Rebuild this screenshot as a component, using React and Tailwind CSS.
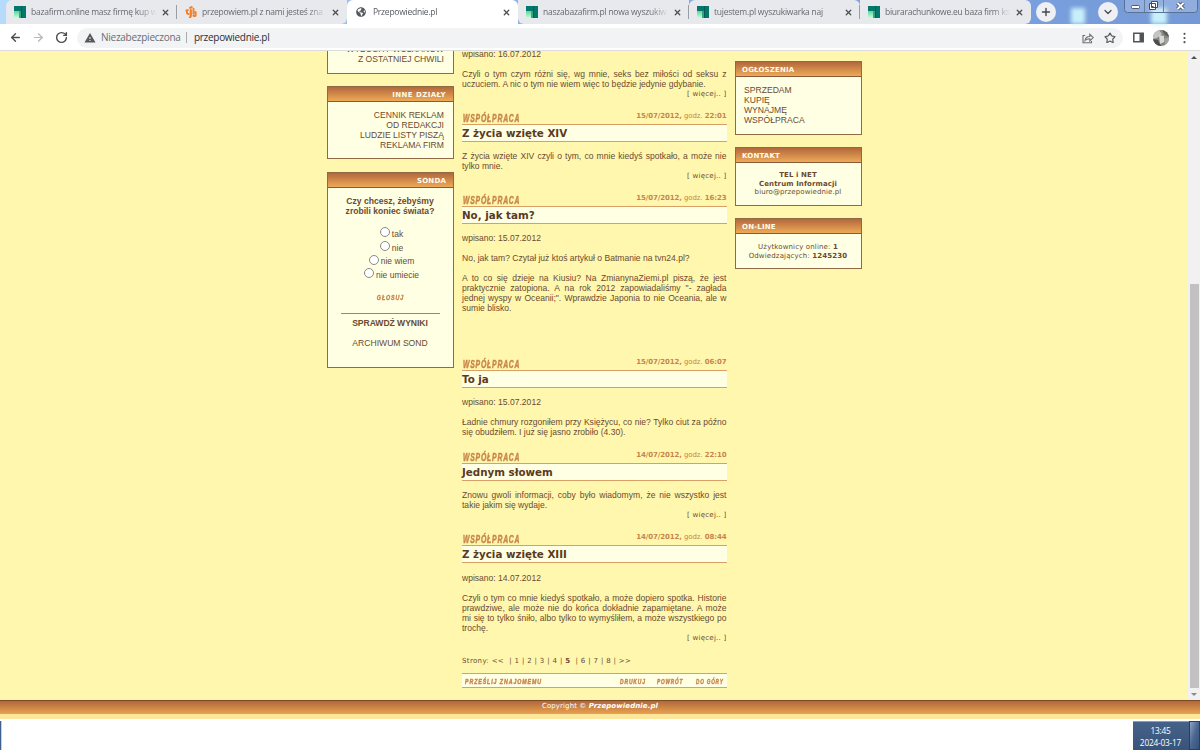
import React from "react";
import { FaGlobeAmericas } from "react-icons/fa";
import { MdWarning } from "react-icons/md";
import { ArrowLeft, ArrowRight, RotateCw, Star, X, Plus, ChevronDown } from "lucide-react";

function TealIcon() {
  return (
    <svg className="h-3 w-3 shrink-0" viewBox="0 0 12 12">
      <defs>
        <linearGradient id="mint" x1="0" y1="0" x2="0" y2="1">
          <stop offset="0" stopColor="#5fd3a0" />
          <stop offset="1" stopColor="#c5ffd8" />
        </linearGradient>
      </defs>
      <rect width="12" height="12" fill="#04786a" />
      <rect y="5" width="7" height="7" fill="url(#mint)" />
      <rect x="5" y="5" width="2" height="7" fill="#35a582" />
      <rect x="7" width="1" height="12" fill="#0b5a52" />
    </svg>
  );
}

function FlameIcon() {
  return (
    <svg className="h-3 w-3 shrink-0" viewBox="0 0 12 12" fill="none" stroke="#f5812a" strokeLinecap="round">
      <path d="M2 4.300v2.600q0 1.100 1.600 1.100M1.300 4.600l1.500-.5" strokeWidth="2" />
      <path d="M5.200 1.800l1.400-.6M5.800 4.200v5.200q0 1.400-.8 1.800" strokeWidth="2.300" />
      <path d="M8.500 2.800v4.600M10.600 6v3.600q-1 .8-2.200 0" strokeWidth="2" />
    </svg>
  );
}

function Tab({ icon, title, titleClass, className = "", divider }) {
  return (
    <div className={"flex h-6 shrink-0 items-center " + className}>
      {icon}
      <div
        className={
          "ml-[5px] min-w-0 flex-1 whitespace-nowrap text-[8.500px] tracking-[-0.240px] [mask-image:linear-gradient(to_right,black_85%,transparent)] " +
          titleClass
        }
      >
        {title}
      </div>
      <X className="ml-1 h-[9px] w-[9px] shrink-0 text-[#4b4e52]" strokeWidth={3.4} />
      <div className={"ml-1.5 h-[14px] w-px shrink-0 " + (divider ? "bg-[#9a9da3]" : "")} />
    </div>
  );
}

function TabBar() {
  const t = "text-[#65696e]";
  return (
    <div className="flex h-6 bg-gradient-to-r from-[#b5dcfb] via-[#83adf0] to-[#7599d6]">
      <Tab className="ml-[6px] w-[171px] rounded-tl-md bg-[#e8e9ed] pl-2" icon={<TealIcon />} title="bazafirm.online masz firmę kup w" titleClass={t} divider />
      <Tab className="w-[170px] rounded-br-md bg-[#e8e9ed] pl-2" icon={<FlameIcon />} title="przepowiem.pl z nami jesteś zna" titleClass={t} />
      <Tab
        className="w-[171px] rounded-t-md bg-white pl-[9px]"
        icon={<FaGlobeAmericas className="mr-0.5 h-[10px] w-[10px] shrink-0 text-[#55595e]" />}
        title="Przepowiednie.pl"
        titleClass="text-[#55595e]"
      />
      <Tab className="w-[171px] rounded-bl-md bg-[#e8e9ed] pl-2" icon={<TealIcon />} title="naszabazafirm.pl nowa wyszukiw" titleClass={t} divider />
      <Tab className="w-[171px] rounded-t-md bg-[#e8e9ed] pl-2" icon={<TealIcon />} title="tujestem.pl wyszukiwarka naj" titleClass={t} divider />
      <Tab className="w-[171px] rounded-r-md bg-[#e8e9ed] pl-2" icon={<TealIcon />} title="biurarachunkowe.eu baza firm ks" titleClass={t} />
      <div className="flex flex-1 items-center">
        <div className="ml-[5px] flex h-5 w-5 items-center justify-center rounded-full bg-[#eef0f4]">
          <Plus className="h-3 w-3 text-[#44474b]" strokeWidth={2.8} />
        </div>
        <div className="ml-[15px] mt-2 h-4 w-3.5 bg-[#c9f0fa] blur-[2px]" />
        <div className="ml-[13px] flex h-5 w-5 items-center justify-center rounded-full bg-[#eef0f4]">
          <ChevronDown className="h-3 w-3 text-[#44474b]" strokeWidth={2.4} />
        </div>
        <div className="relative ml-1.5 h-6 w-[74px]">
          <div className="absolute left-[27px] top-2 h-4 w-4 bg-[#c9f0fa] blur-[2px]" />
          <svg className="absolute left-0 top-0 h-[13px] w-[74px]" viewBox="0 0 74 13" fill="none">
            <path d="M.5 0v9.500q0 3 3 3h67q3 0 3-3V0" fill="#ffffff33" stroke="#5a7095" />
            <path d="M20.500 0v12M39.500 0v12" stroke="#6980a5" />
            <rect x="7.500" y="5.500" width="8" height="3" rx="1" fill="#fff" stroke="#52596a" />
            <path d="M27.500 1.500h6v6h-6zM25.500 3.500h6v6h-6z" fill="#fff" stroke="#444c5c" />
            <path d="M27.500 6.500h2" stroke="#444c5c" />
            <path d="M53.500 3l6 6M59.500 3l-6 6" stroke="#444c5c" strokeWidth="3.600" />
            <path d="M53.500 3l6 6M59.500 3l-6 6" stroke="#fff" strokeWidth="1.800" />
          </svg>
        </div>
      </div>
    </div>
  );
}

function Toolbar() {
  return (
    <div className="flex h-[27px] items-center border-b border-[#dcdcd8] bg-white pt-px text-[10px] text-[#6a6e73]">
      <ArrowLeft className="ml-[9px] h-[13px] w-[13px] text-[#4a4d51]" strokeWidth={2.5} />
      <ArrowRight className="ml-2.5 h-[13px] w-[13px] text-[#b6b8bb]" strokeWidth={2.3} />
      <RotateCw className="ml-2.5 h-[13px] w-[13px] text-[#4a4d51]" strokeWidth={2.6} />
      <div className="ml-[9px] flex h-5 w-[1046px] items-center rounded-full bg-[#f1f3f4] pl-[7px] pr-[7px]">
        <MdWarning className="h-3 w-3 text-[#55595d]" />
        <span className="ml-[5px] w-[80px] whitespace-nowrap tracking-[-0.260px]">Niezabezpieczona</span>
        <div className="ml-[5px] h-[11px] w-px bg-[#a8abae]" />
        <span className="ml-[7px] flex-1 tracking-[-0.300px] text-[#2d3034]">przepowiednie.pl</span>
        <svg className="h-3 w-3" viewBox="0 0 12 12" fill="none" stroke="#6c7074" strokeWidth="1.100">
          <path d="M3.200 3.500H1v7.300h8.500V9M3 8.500c.4-2.700 2-4 4.800-4V2.300l3.400 3.300-3.400 3.300V6.700C5.600 6.700 4.200 7.200 3 8.500z" />
        </svg>
        <Star className="ml-[10px] h-3 w-3 text-[#55595d]" strokeWidth={2.3} />
      </div>
      <svg className="ml-2.5 h-[11px] w-[11px]" viewBox="0 0 11 11">
        <path d="M.8 1.300h9.400v8.400H.8z" fill="none" stroke="#505458" strokeWidth="1.500" />
        <path d="M6.500 1h4v9h-4z" fill="#505458" />
      </svg>
      <svg className="ml-[9px] h-4 w-4" viewBox="0 0 16 16">
        <defs>
          <clipPath id="avatar"><circle cx="8" cy="8" r="8" /></clipPath>
          <filter id="soft"><feGaussianBlur stdDeviation="0.7" /></filter>
        </defs>
        <g clipPath="url(#avatar)">
          <rect width="16" height="16" fill="#858581" />
          <g filter="url(#soft)">
            <path d="M0 2l6-2 3 4-5 4-4 1z" fill="#c4c5c2" />
            <path d="M9 0h7v7l-4-2z" fill="#5a5b59" />
            <path d="M6 5l5 1v6l-4 2z" fill="#d9dad8" />
            <path d="M0 9l5 1 3 6H0z" fill="#4d4e4b" />
            <path d="M11 9l5-2v6l-4 2z" fill="#a2a3a0" />
          </g>
        </g>
      </svg>
      <svg className="ml-[14px] h-3 w-[3px]" viewBox="0 0 3 12" fill="#505458">
        <circle cx="1.500" cy="1.800" r="1.100" />
        <circle cx="1.500" cy="6" r="1.100" />
        <circle cx="1.500" cy="10.200" r="1.100" />
      </svg>
    </div>
  );
}

const verdana = "[font-family:'DejaVu_Sans',sans-serif]";
const heavy = "font-bold italic text-[#c8854a] [-webkit-text-stroke:0.450px_#c8854a]";

function Panel({ title, right, wide, className = "", children }) {
  return (
    <section className={"w-[127px] shrink-0 border border-[#8f6a45] bg-[#ffffe4] " + className}>
      <h3
        className={
          "h-[15px] border-b border-[#8a5a38] bg-gradient-to-b from-[#b2683b] to-[#eeaa58] pl-1.5 text-[7px] font-bold leading-[16px] text-[#fffbe8] " +
          verdana +
          (right ? " pr-[7px] text-right" : "") +
          (wide ? " tracking-[0.450px]" : " tracking-[0.180px]")
        }
      >
        {title}
      </h3>
      {children}
    </section>
  );
}

function Radio({ label }) {
  return (
    <label className="flex h-[13.700px] items-center justify-center pl-[2px]">
      <span className="-mt-px h-[10px] w-[10px] rounded-full border border-[#8a8a86] bg-white" />
      <span className="ml-[2px] mt-0.5">{label}</span>
    </label>
  );
}

function LeftColumn() {
  return (
    <div className="w-[127px] shrink-0 text-[8.600px] leading-[10px]">
      <div className="flex h-[23px] flex-col justify-end border border-t-0 border-[#8f6a45] bg-[#ffffe4] pb-[9px] pr-[9px] text-right">
        <div>WYBUCHY WULKANÓW</div>
        <div>Z OSTATNIEJ CHWILI</div>
      </div>
      <Panel title="INNE DZIAŁY" right wide className="mt-3 h-[73px]">
        <div className="pr-[9px] pt-2 text-right">
          <div>CENNIK REKLAM</div>
          <div>OD REDAKCJI</div>
          <div>LUDZIE LISTY PISZĄ</div>
          <div>REKLAMA FIRM</div>
        </div>
      </Panel>
      <Panel title="SONDA" right className="mt-[13px] h-[196px]">
        <div className="pt-2 text-center">
          <div className="pr-px font-bold">
            <div>Czy chcesz, żebyśmy</div>
            <div>zrobili koniec świata?</div>
          </div>
          <div className="mt-[10px] text-[8.500px]">
            <Radio label="tak" />
            <Radio label="nie" />
            <Radio label="nie wiem" />
            <Radio label="nie umiecie" />
          </div>
          <div className={"mt-[12px] origin-center scale-x-[0.700] text-[7.600px] tracking-[1.300px] " + heavy}>GŁOSUJ</div>
          <div className="mx-auto mt-[10px] w-[99px] border-t border-[#a98262]" />
          <div className="mt-[4px] pr-px font-bold tracking-[-0.050px]">SPRAWDŹ WYNIKI</div>
          <div className="mt-[10px] pr-px">ARCHIWUM SOND</div>
        </div>
      </Panel>
    </div>
  );
}

function Lines({ lines }) {
  return lines.map((l, i) => (
    <p key={i} className={"h-[10px] whitespace-nowrap " + (i === lines.length - 1 ? "" : "[text-align-last:justify]")}>
      {l}
    </p>
  ));
}

function More() {
  return <div className={"h-[10px] text-right text-[7px] tracking-[0.250px] " + verdana}>[ więcej.. ]</div>;
}

function Header({ date, time, title }) {
  return (
    <header className="h-[31px]">
      <div className="flex h-[13px] items-start justify-between text-[#c8854a]">
        <span className={"ml-px mt-[3px] w-[57px] origin-left scale-x-[0.670] whitespace-nowrap text-[10.200px] leading-[10px] tracking-[1.200px] " + heavy}>
          WSPÓŁPRACA
        </span>
        <span className={"text-[7px] font-bold leading-[10px] tracking-[-0.120px] " + verdana}>
          {date}, <span className="font-normal">godz.</span> {time}
        </span>
      </div>
      <h2 className={"h-[18px] border-y border-[#d9a066] bg-[#ffffe4] text-[10.300px] font-bold leading-[16px] text-[#5a3a22] " + verdana}>{title}</h2>
    </header>
  );
}

const navItem = "origin-left whitespace-nowrap ";

function MainColumn() {
  return (
    <main className="ml-2 w-[264.500px] shrink-0 text-[8.550px] leading-[10px]">
      <div className="-mt-[2px] h-[62px]">
        <Lines lines={["wpisano: 16.07.2012"]} />
        <div className="h-[10px]" />
        <Lines lines={["Czyli o tym czym różni się, wg mnie, seks bez miłości od seksu z", "uczuciem. A nic o tym nie wiem więc to będzie jedynie gdybanie."]} />
        <More />
      </div>
      <article className="h-[82px]">
        <Header date="15/07/2012" time="22:01" title="Z życia wzięte XIV" />
        <div className="pt-[9px]">
          <Lines lines={["Z życia wzięte XIV czyli o tym, co mnie kiedyś spotkało, a może nie", "tylko mnie."]} />
          <More />
        </div>
      </article>
      <article className="h-[164px]">
        <Header date="15/07/2012" time="16:23" title="No, jak tam?" />
        <div className="flex flex-col gap-[10px] pt-[9px]">
          <div><Lines lines={["wpisano: 15.07.2012"]} /></div>
          <div><Lines lines={["No, jak tam? Czytał już ktoś artykuł o Batmanie na tvn24.pl?"]} /></div>
          <div>
            <Lines
              lines={[
                "A to co się dzieje na Kiusiu? Na ZmianynaZiemi.pl piszą, że jest",
                "praktycznie zatopiona. A na rok 2012 zapowiadaliśmy \"- zagłada",
                "jednej wyspy w Oceanii;\". Wprawdzie Japonia to nie Oceania, ale w",
                "sumie blisko.",
              ]}
            />
          </div>
        </div>
      </article>
      <article className="h-[93px]">
        <Header date="15/07/2012" time="06:07" title="To ja" />
        <div className="flex flex-col gap-[10px] pt-[9px]">
          <div><Lines lines={["wpisano: 15.07.2012"]} /></div>
          <div><Lines lines={["Ładnie chmury rozgoniłem przy Księżycu, co nie? Tylko ciut za późno", "się obudziłem. I już się jasno zrobiło (4.30)."]} /></div>
        </div>
      </article>
      <article className="h-[82px]">
        <Header date="14/07/2012" time="22:10" title="Jednym słowem" />
        <div className="pt-[9px]">
          <Lines lines={["Znowu gwoli informacji, coby było wiadomym, że nie wszystko jest", "takie jakim się wydaje."]} />
          <More />
        </div>
      </article>
      <article className="h-[123px]">
        <Header date="14/07/2012" time="08:44" title="Z życia wzięte XIII" />
        <div className="pt-[10px]">
          <Lines lines={["wpisano: 14.07.2012"]} />
          <div className="h-[10px]" />
          <Lines
            lines={[
              "Czyli o tym co mnie kiedyś spotkało, a może dopiero spotka. Historie",
              "prawdziwe, ale może nie do końca dokładnie zapamiętane. A może",
              "mi się to tylko śniło, albo tylko to wymyśliłem, a może wszystkiego po",
              "trochę.",
            ]}
          />
          <More />
        </div>
      </article>
      <div className={"h-[18px] whitespace-pre pt-px text-[7px] tracking-[0.350px] " + verdana}>
        {"Strony: <<  | 1 | 2 | 3 | 4 | "}<b>5</b>{"  | 6 | 7 | 8 | >>"}
      </div>
      <nav className={"flex h-[15px] items-center border-y border-[#d9a066] bg-[#ffffe4] pl-[3px] pt-0.5 text-[7.400px] tracking-[1.300px] " + heavy}>
        <span className={navItem + "w-[155px] scale-x-[0.710]"}>PRZEŚLIJ ZNAJOMEMU</span>
        <span className={navItem + "w-[37px] scale-x-[0.670]"}>DRUKUJ</span>
        <span className={navItem + "w-[39px] scale-x-[0.640]"}>POWRÓT</span>
        <span className={navItem + "w-[28px] scale-x-[0.630]"}>DO GÓRY</span>
      </nav>
    </main>
  );
}

function RightColumn() {
  return (
    <div className="ml-[8.500px] w-[127px] shrink-0 pt-[10px] text-[8.600px] leading-[10px]">
      <Panel title="OGŁOSZENIA" className="h-[74px]">
        <div className="pl-2 pt-2">
          <div>SPRZEDAM</div>
          <div>KUPIĘ</div>
          <div>WYNAJMĘ</div>
          <div>WSPÓŁPRACA</div>
        </div>
      </Panel>
      <Panel title="KONTAKT" className="mt-3 h-[59px]">
        <div className={"pr-px pt-2 text-center text-[7px] leading-[8.700px] tracking-[0.100px] " + verdana}>
          <div className="font-bold">TEL i NET</div>
          <div className="font-bold">Centrum Informacji</div>
          <div>biuro@przepowiednie.pl</div>
        </div>
      </Panel>
      <Panel title="ON-LINE" className="mt-3 h-[51px]">
        <div className={"pr-px pt-[9px] text-center text-[7px] leading-[8.700px] tracking-[0.140px] " + verdana}>
          <div>Użytkownicy online: <b>1</b></div>
          <div>Odwiedzających: <b>1245230</b></div>
        </div>
      </Panel>
    </div>
  );
}

function Scrollbar() {
  return (
    <div className="flex w-3 shrink-0 flex-col items-center bg-[#f1f1f1]">
      <svg className="mt-1 h-[5px] w-[6px]" viewBox="0 0 6 5"><path d="M0 4l3-3 3 3z" fill="#505050" /></svg>
      <div className="mt-[224px] h-[404px] w-[9px] bg-[#c1c1c1]" />
      <svg className="mt-1 h-[5px] w-[6px]" viewBox="0 0 6 5"><path d="M0 1l3 3 3-3z" fill="#8a8a8a" /></svg>
    </div>
  );
}

export default function App() {
  return (
    <div className="flex h-[750px] w-[1200px] flex-col overflow-hidden bg-white text-[9px] [font-family:'Open_Sans','Noto_Sans',sans-serif]">
      <TabBar />
      <Toolbar />
      <div className="flex h-[649px] overflow-hidden bg-[#fff7ae] text-[#6b4a30] [font-family:'Liberation_Sans',Arial,sans-serif]">
        <div className="flex flex-1 items-start pl-[327px]">
          <LeftColumn />
          <MainColumn />
          <RightColumn />
        </div>
        <Scrollbar />
      </div>
      <footer className={"h-[14px] border-t border-[#7a4a26] bg-gradient-to-b from-[#b2683b] to-[#e9a351] text-center text-[7px] leading-[11px] tracking-[0.090px] text-white " + verdana}>
        Copyright © <b className="italic">Przepowiednie.pl</b>
      </footer>
      <div className="h-[5px] bg-[#fce79c]" />
      <div className="flex h-[31px] justify-between pt-[2px]">
        <div className="w-[2px] border-r border-[#c5d0de] bg-[#3f5f8c]" />
        <div className="flex">
          <div className="w-14 border-t border-[#8d9cb2] bg-gradient-to-b from-[#456288] to-[#38547a] pr-px pt-[3px] text-center text-[8.300px] leading-[12px] text-white">
            <div className="tracking-[-0.200px]">13:45</div>
            <div className="whitespace-nowrap tracking-[-0.200px]">2024-03-17</div>
          </div>
          <div className="w-[11px] border border-[#26405f] bg-gradient-to-br from-[#8fa3bd] via-[#4a6791] to-[#35527b]" />
        </div>
      </div>
    </div>
  );
}
